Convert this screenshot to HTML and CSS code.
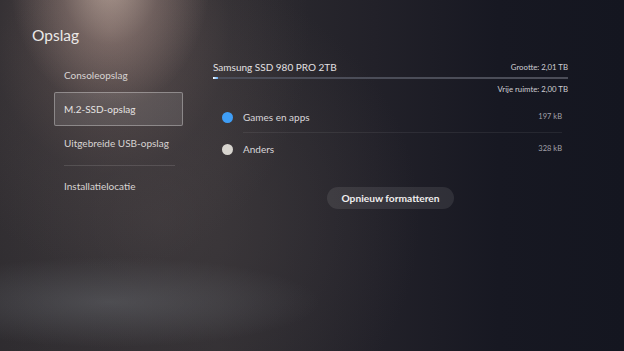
FILE: index.html
```html
<!DOCTYPE html>
<html lang="nl">
<head>
<meta charset="utf-8">
<title>Opslag</title>
<link rel="stylesheet" href="styles.css">
</head>
<body>
<div class="screen">
  <h1 class="title">Opslag</h1>
  <div class="content">
    <nav class="nav">
      <div class="nav-item">Consoleopslag</div>
      <div class="nav-item selected">M.2-SSD-opslag</div>
      <div class="nav-item">Uitgebreide USB-opslag</div>
      <div class="nav-divider"></div>
      <div class="nav-item">Installatielocatie</div>
    </nav>
    <section class="panel">
      <div class="drive-head">
        <span class="drive-name">Samsung SSD 980 PRO 2TB</span>
        <span class="drive-size">Grootte: 2,01 TB</span>
      </div>
      <div class="bar"><div class="bar-fill"></div></div>
      <div class="drive-free">Vrije ruimte: 2,00 TB</div>
      <div class="list">
        <div class="row">
          <span class="dot dot-blue"></span>
          <div class="row-body">
            <span class="row-label">Games en apps</span>
            <span class="row-value">197 kB</span>
          </div>
        </div>
        <div class="row">
          <span class="dot dot-white"></span>
          <div class="row-body last">
            <span class="row-label">Anders</span>
            <span class="row-value">328 kB</span>
          </div>
        </div>
      </div>
      <div class="actions">
        <button class="btn">Opnieuw formatteren</button>
      </div>
    </section>
  </div>
</div>
</body>
</html>
```

FILE: styles.css
```css
html, body {
  margin: 0;
  padding: 0;
  background: #151722;
}
.screen {
  width: 624px;
  height: 351px;
  overflow: hidden;
  font-family: Lato, "Noto Sans", sans-serif;
  color: #dcdada;
  background:
    radial-gradient(ellipse 100px 130px at 110px -20px, rgba(230,205,190,0.6), rgba(195,165,155,0.28) 50%, rgba(120,100,100,0) 100%),
    radial-gradient(ellipse 200px 240px at 110px 30px, rgba(165,135,126,0.38), rgba(110,95,95,0.12) 60%, rgba(100,90,90,0) 100%),
    radial-gradient(ellipse 210px 45px at 110px 302px, rgba(115,120,126,0.38), rgba(90,95,100,0) 100%),
    radial-gradient(ellipse 260px 250px at 160px 220px, rgba(75,68,70,0.55), rgba(60,55,58,0) 100%),
    linear-gradient(90deg, #2b292d 0%, #2e2c30 35%, #222129 60%, #171822 80%, #141620 100%);
}
.title {
  margin: 0;
  padding: 26px 0 0 32px;
  font-size: 15.5px;
  line-height: 18px;
  font-weight: 400;
  color: #ebe8e6;
}
.content {
  display: flex;
  align-items: flex-start;
  padding-left: 54px;
}
.nav {
  width: 129px;
  margin-top: 14px;
  display: flex;
  flex-direction: column;
}
.nav-item {
  height: 34px;
  box-sizing: border-box;
  padding-left: 9px;
  display: flex;
  align-items: center;
  white-space: nowrap;
  font-size: 10px;
  color: #d8d4d3;
  border: 1px solid transparent;
  border-radius: 2px;
}
.nav-item.selected {
  background: rgba(255,255,255,0.10);
  border-color: rgba(255,255,255,0.32);
  color: #e6e3e2;
}
.nav-divider {
  height: 1px;
  margin: 5px 8px 3px 10px;
  background: rgba(255,255,255,0.12);
}
.panel {
  width: 355px;
  margin-left: 30px;
  margin-top: 16px;
}
.drive-head {
  height: 14px;
  display: flex;
  justify-content: space-between;
  align-items: center;
}
.drive-name {
  font-size: 10px;
  color: #e2e0e2;
}
.drive-size, .drive-free {
  font-size: 7.8px;
  color: #cfced3;
}
.bar {
  margin-top: 3px;
  height: 2px;
  background: #4b4d58;
}
.bar-fill {
  width: 5px;
  height: 100%;
  background: linear-gradient(90deg, #ffffff, #5aa8f5);
}
.drive-free {
  margin-top: 4px;
  line-height: 12px;
  text-align: right;
}
.list {
  margin-top: 6px;
}
.row {
  display: flex;
  align-items: center;
  padding-left: 9px;
}
.dot {
  width: 11px;
  height: 11px;
  border-radius: 50%;
  flex: none;
  margin-right: 10px;
}
.dot-blue { background: #3f9ef6; }
.dot-white { background: #d8d5cf; }
.row-body {
  flex: 1;
  height: 32px;
  box-sizing: border-box;
  display: flex;
  align-items: center;
  justify-content: space-between;
  margin-right: 6px;
  border-bottom: 1px solid rgba(255,255,255,0.07);
}
.row-body.last {
  border-bottom-color: transparent;
}
.row-label {
  font-size: 10px;
  color: #d9d7da;
}
.row-value {
  font-size: 7.5px;
  color: #a3a2aa;
}
.actions {
  display: flex;
  justify-content: center;
  margin-top: 22px;
}
.btn {
  height: 22px;
  padding: 0 14px;
  border: none;
  border-radius: 11px;
  background: rgba(255,255,255,0.09);
  color: #f0eeee;
  font-family: Lato, "Noto Sans", sans-serif;
  font-size: 10.2px;
  font-weight: 700;
  cursor: pointer;
}
```
